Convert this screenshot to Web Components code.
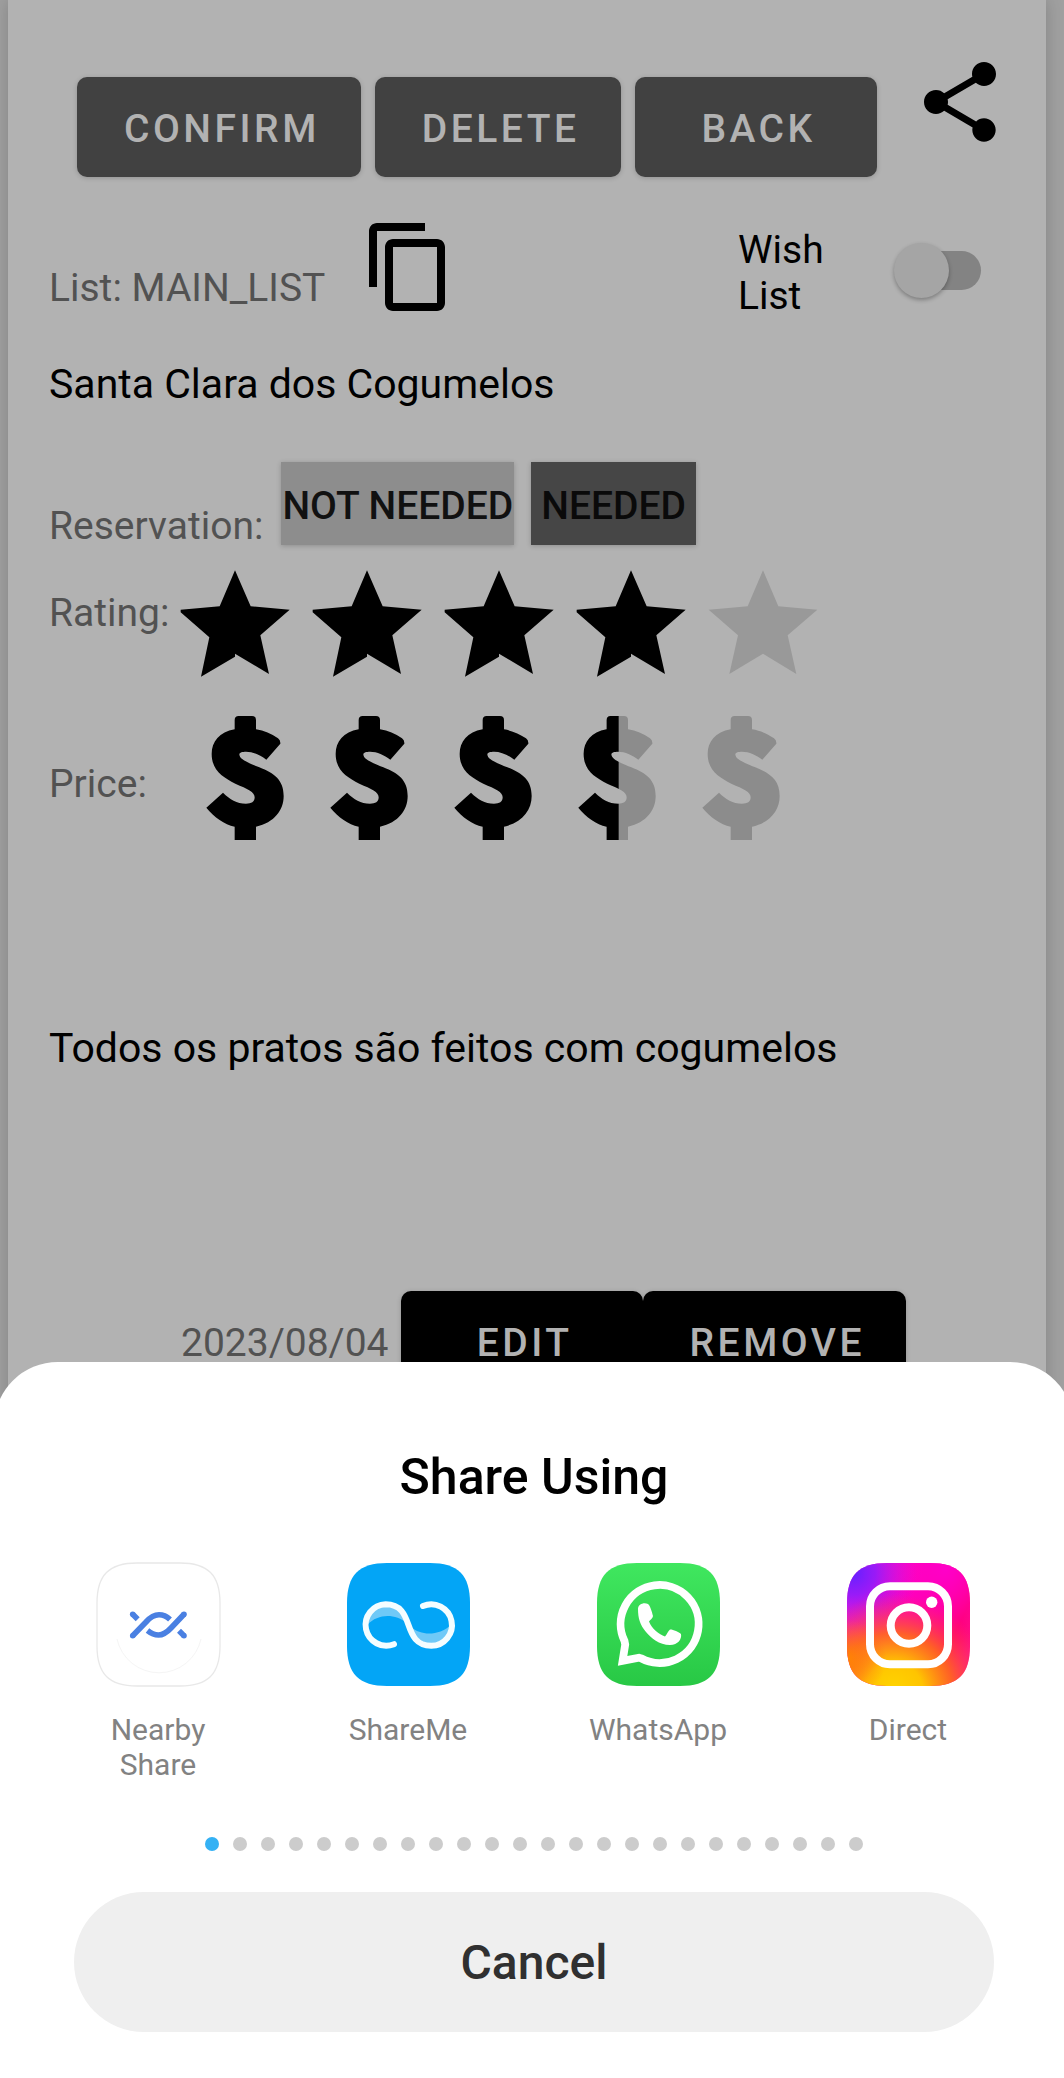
<!DOCTYPE html>
<html lang="en">
<head>
<meta charset="utf-8">
<meta name="viewport" content="width=device-width, initial-scale=1">
<title>Restaurant</title>
<style>
  html, body { margin: 0; }
  body { font-family: Roboto, "Liberation Sans", sans-serif; background: #a0a0a0; }
</style>
</head>
<body>
<restaurant-page></restaurant-page>
<script>
const define = (name, html, setup) => {
  const tpl = document.createElement('template');
  tpl.innerHTML = html;
  customElements.define(name, class extends HTMLElement {
    constructor() {
      super();
      this.attachShadow({ mode: 'open' }).append(tpl.content.cloneNode(true));
    }
    connectedCallback() { if (setup) setup(this, this.shadowRoot); }
  });
};

define('app-button', `
<style>
  :host { display: inline-flex; }
  button {
    font: 500 39px/46px Roboto, sans-serif; letter-spacing: 0.09em; text-transform: uppercase;
    min-width: 242px; height: 100px; padding: 4px 41px 0 47px; border: 0; border-radius: 10px;
    background: var(--button-bg, #414141); color: #b2b2b2;
    box-shadow: 0 1px 5px rgba(0, 0, 0, .18);
  }
</style>
<button type="button"><slot></slot></button>`);

define('choice-button', `
<style>
  :host { display: inline-flex; }
  button {
    font: 500 39px/46px Roboto, sans-serif; text-transform: uppercase; white-space: nowrap;
    height: 83px; padding: 4px var(--pad, 0) 0; border: 0; background: var(--choice-bg); color: var(--choice-ink);
    box-shadow: 0 1px 5px rgba(0, 0, 0, .2);
  }
</style>
<button type="button"><slot></slot></button>`);

define('icon-button', `
<style>
  :host { display: inline-flex; }
  button { display: flex; padding: 0; border: 0; background: none; color: #000; }
  svg { width: 96px; height: 96px; fill: currentColor; }
</style>
<button type="button"><svg viewBox="0 0 24 24"><path/></svg></button>`, (host, root) => {
  const paths = {
    share: 'M18 16.08c-.76 0-1.44.3-1.96.77L8.91 12.7c.05-.23.09-.46.09-.7s-.04-.47-.09-.7l7.05-4.11c.54.5 1.25.81 2.04.81 1.66 0 3-1.34 3-3s-1.34-3-3-3-3 1.34-3 3c0 .24.04.47.09.7L8.04 9.81C7.5 9.31 6.79 9 6 9c-1.66 0-3 1.34-3 3s1.34 3 3 3c.79 0 1.5-.31 2.04-.81l7.12 4.16c-.05.21-.08.43-.08.65 0 1.61 1.31 2.92 2.92 2.92s2.92-1.31 2.92-2.92-1.31-2.92-2.92-2.92z',
    copy: 'M16 1H4c-1.1 0-2 .9-2 2v14h2V3h12V1zm3 4H8c-1.1 0-2 .9-2 2v14c0 1.1.9 2 2 2h11c1.1 0 2-.9 2-2V7c0-1.1-.9-2-2-2zm0 16H8V7h11v14z'
  };
  root.querySelector('path').setAttribute('d', paths[host.getAttribute('icon')]);
  root.querySelector('button').setAttribute('aria-label', host.getAttribute('icon'));
});

define('toggle-switch', `
<style>
  :host { display: block; }
  label { display: flex; align-items: flex-start; justify-content: space-between; width: 243px; }
  span { width: 100px; font-size: 39px; line-height: 46px; color: #000; }
  input { appearance: none; margin: 16px 0 0; width: 87px; height: 55px; display: grid; align-items: center; }
  input::before, input::after { content: ""; grid-area: 1 / 1; }
  input::before { justify-self: end; width: 74px; height: 39px; border-radius: 20px; background: #838383; }
  input::after { width: 55px; height: 55px; border-radius: 50%; background: #a5a5a5; box-shadow: 0 2px 4px rgba(0, 0, 0, .3); }
  input:checked::after { justify-self: end; }
</style>
<label><span><slot></slot></span><input type="checkbox" role="switch"></label>`);

const STAR_ON = 'M393 392 L440 500 L557 510 L469 587 L495 703 L393 642 V651 L291 711 L316 593 L230 518 V510 L347 500Z';
const STAR_OFF = 'M393 392 L439 500 L556 510 L467 587 L493 703 L393 642 L292 703 L318 587 L230 510 L347 500Z';
define('star-rating', `
<style>
  :host { display: flex; }
  svg { width: 132px; height: 107px; }
</style>`, (host, root) => {
  const value = Number(host.getAttribute('value'));
  for (let i = 0; i < 5; i++) {
    const on = i < value;
    root.innerHTML += `<svg viewBox="195 391 396 321" aria-hidden="true"><path d="${on ? STAR_ON : STAR_OFF}" fill="${on ? '#000' : '#999'}"/></svg>`;
  }
});

const COIN = 'M166 118C120 126 97 155 97 192C97 240 130 262 168 281C205 297 226 305 226 322C226 336 216 341 200 341C172 341 152 328 131 308L81 353C105 382 135 403 166 410V450H230V410C285 398 313 360 313 318C313 270 285 250 240 232C205 218 180 208 180 193C180 187 190 185 200 185C222 185 242 195 261 209L303 161Q304 150 296 145C275 131 255 122 230 118V90Q230 78 218 78H178Q166 78 166 90Z';
define('price-rating', `
<style>
  :host { display: flex; }
  svg { width: 124px; height: 124px; }
</style>`, (host, root) => {
  const value = Number(host.getAttribute('value'));
  for (let i = 0; i < 5; i++) {
    const part = Math.max(0, Math.min(1, value - i));
    const cut = part < 1 ? part * 372 + 5 : 372;
    root.innerHTML += `<svg viewBox="11 78 372 372" aria-hidden="true">
      <clipPath id="c${i}"><rect x="11" y="78" width="${cut}" height="372"/></clipPath>
      ${part < 1 ? `<path d="${COIN}" fill="#8c8c8c"/>` : ''}
      ${part > 0 ? `<path d="${COIN}" clip-path="url(#c${i})"/>` : ''}</svg>`;
  }
});

define('restaurant-card', `
<style>
  :host {
    display: block; box-sizing: border-box; min-height: 100vh; margin: 0 18px 0 8px; padding: 54px 38px 0 41px;
    background: #b2b2b2; color: #525252; font-size: 39px; line-height: 46px;
    box-shadow: 0 0 16px rgba(0, 0, 0, .18);
  }
  .row { display: flex; align-items: flex-end; }
  .tools { height: 123px; gap: 14px; padding-left: 28px; }
  .tools icon-button { align-self: flex-start; margin-left: auto; }
  .list { height: 100px; margin-top: 42px; }
  .list > span { margin-bottom: 8px; }
  .list icon-button { align-self: flex-start; margin-left: 36px; }
  .list toggle-switch { margin: 0 27px 0 auto; }
  input, textarea {
    display: block; width: 100%; box-sizing: border-box; padding: 0; border: 0; resize: none; outline: 0;
    background: none; color: #000; font: 400 41px/48px Roboto, sans-serif;
  }
  input { height: 48px; margin-top: 41px; }
  textarea { height: 192px; margin-top: 184px; }
  .booking { height: 87px; margin-top: 54px; align-items: flex-start; }
  .booking > span { align-self: flex-end; margin-right: 18px; }
  .booking choice-button + choice-button { margin-left: 17px; }
  .stars { margin-top: 21px; align-items: flex-start; }
  .stars > span, .price > span { width: 120px; }
  .stars > span { margin-top: 20px; }
  .price { margin-top: 39px; align-items: flex-start; }
  .price > span { width: 134px; margin-top: 45px; }
  .visit { margin-top: 75px; align-items: flex-start; padding-left: 132px; }
  .visit time { margin: 29px 12px 0 0; }
  .visit app-button { --button-bg: #000; }
  .plain { --choice-bg: #8d8d8d; --choice-ink: #111; --pad: 1px; }
  .chosen { --choice-bg: #464646; --choice-ink: #0a0a0a; --pad: 10px; }
</style>
<div class="row tools">
  <app-button>Confirm</app-button><app-button>Delete</app-button><app-button>Back</app-button>
  <icon-button icon="share"></icon-button>
</div>
<div class="row list">
  <span>List: MAIN_LIST</span><icon-button icon="copy"></icon-button>
  <toggle-switch>Wish List</toggle-switch>
</div>
<input type="text" aria-label="Name" value="Santa Clara dos Cogumelos">
<div class="row booking">
  <span>Reservation:</span>
  <choice-button class="plain">Not needed</choice-button><choice-button class="chosen">Needed</choice-button>
</div>
<div class="row stars"><span>Rating:</span><star-rating value="4"></star-rating></div>
<div class="row price"><span>Price:</span><price-rating value="3.5"></price-rating></div>
<textarea aria-label="Notes">Todos os pratos são feitos com cogumelos</textarea>
<div class="row visit">
  <time>2023/08/04</time><app-button>Edit</app-button><app-button>Remove</app-button>
</div>`);

const TILE = 'M61.5 0H83C111 0 123 12 123 40V83C123 111 111 123 83 123H40C12 123 0 111 0 83V40C0 12 12 0 40 0Z';
const LOGOS = {
  nearby: `<path d="${TILE}" fill="#fff" stroke="#e8e8e8" stroke-width="1.3"/>
    <path d="M20 76A43 43 0 0 0 104 76" fill="none" stroke="#f5f5f5" stroke-width="1"/>
    <g fill="none" stroke="#4a80e2" stroke-width="5.6">
      <path d="M35.7 72.7L49 59Q55.500 51.800 62 51.800Q68 51.800 73 56.500"/>
      <path d="M87 51.300L74 65Q67.500 72 61.500 72Q56 72 50.500 67.500"/>
      <path d="M35.700 51.300L40.700 56.300M87 72.700L82 67.700"/></g>
    <g fill="#4a80e2"><circle cx="35.700" cy="72.700" r="2.800"/><circle cx="87" cy="51.300" r="2.800"/><circle cx="35.700" cy="51.300" r="2.800"/><circle cx="87" cy="72.700" r="2.800"/></g>`,
  shareme: `<path d="${TILE}" fill="#03a5f6"/>
    <path d="M20 62C21 38 50 35 60 60C48 51 32 50 20 62ZM104 62C103 84 74 90 64 64C74 73 92 73 104 62Z" fill="#6fc9f7"/>
    <path d="M47 81.200A20.700 20.700 0 1 1 38.700 41.300C54 41.300 58 52 61.500 62S69 82.700 84.300 82.700A20.700 20.700 0 1 0 76 43" fill="none" stroke="#f4fdff" stroke-width="6" stroke-linecap="round"/>`,
  whatsapp: `<linearGradient id="g" x2="0" y2="1"><stop stop-color="#40e75f"/><stop offset="1" stop-color="#28c845"/></linearGradient>
    <path d="${TILE}" fill="url(#g)"/>
    <path d="M44 95.300A39 39 0 1 0 27.500 78L28.200 81.500L25.600 97.800L42 94.700Z" fill="none" stroke="#fff" stroke-width="7.800"/>
    <path d="M41 46C41 41 47 39 51 41C53 42 55 49 56 53C56 55 53 57 52 58.500C55 66 62 71.500 68 73.500C70 71 71 68.500 73 66.500C75 66 82 69 84 71C85 76 81 82 73 82C62 82 54 75 49 69C43 62 41 55 41 46Z" fill="#fff"/>`,
  direct: `<linearGradient id="b" x1="0" y1=".2" x2="1" y2=".7"><stop stop-color="#f01fd0"/><stop offset=".45" stop-color="#ff00b4"/><stop offset=".85" stop-color="#ff0068"/><stop offset="1" stop-color="#ff1288"/></linearGradient>
    <radialGradient id="m" cx=".8" cy=".05" r=".6"><stop stop-color="#ff00c8"/><stop offset="1" stop-color="#ff00c8" stop-opacity="0"/></radialGradient>
    <radialGradient id="p" cx=".05" cy=".08" r=".52"><stop stop-color="#6420ff"/><stop offset=".35" stop-color="#8a1bff" stop-opacity=".85"/><stop offset="1" stop-color="#d010f0" stop-opacity="0"/></radialGradient>
    <radialGradient id="y" cx=".38" cy="1.050" r=".8"><stop stop-color="#ffd600"/><stop offset=".3" stop-color="#ffc400"/><stop offset=".6" stop-color="#ff6a1c" stop-opacity=".9"/><stop offset="1" stop-color="#ff2a60" stop-opacity="0"/></radialGradient>
    <radialGradient id="o" cx="0" cy=".78" r=".32"><stop stop-color="#ff8600"/><stop offset="1" stop-color="#ff6a20" stop-opacity="0"/></radialGradient>
    <path d="${TILE}" fill="url(#b)"/><path d="${TILE}" fill="url(#m)"/><path d="${TILE}" fill="url(#p)"/><path d="${TILE}" fill="url(#y)"/><path d="${TILE}" fill="url(#o)"/>
    <g fill="none" stroke="#fff" stroke-width="8"><rect x="23" y="23.300" width="78" height="78" rx="20"/><circle cx="62" cy="62.500" r="18.300"/></g>
    <circle cx="84.700" cy="39.300" r="5.700" fill="#fff"/>`
};
define('share-target', `
<style>
  :host { display: flex; flex: 1 1 0; justify-content: center; }
  button {
    display: flex; flex-direction: column; align-items: center; gap: 26px; width: 150px; padding: 0;
    border: 0; background: none; color: #828282; font: 400 30px/35px Roboto, sans-serif;
  }
  svg { width: 123px; height: 123px; overflow: visible; }
</style>
<button type="button"><svg viewBox="0 0 123 123" aria-hidden="true"></svg><span><slot></slot></span></button>`, (host, root) => {
  root.querySelector('svg').innerHTML = LOGOS[host.getAttribute('logo')];
});

define('page-dots', `
<style>
  :host { display: flex; justify-content: center; gap: 14px; }
  i { width: 14px; height: 14px; border-radius: 50%; background: #ccc; }
  i:first-of-type { background: #34b1f4; }
</style>`, (host, root) => {
  for (let i = 0; i < Number(host.getAttribute('count')); i++) root.append(document.createElement('i'));
});

define('share-sheet', `
<style>
  :host {
    display: flex; flex-direction: column; background: #fff; border-radius: 64px 64px 0 0;
    padding: 86px 80px 46px; box-sizing: border-box;
  }
  h2 { margin: 0; font: 500 50px/58px Roboto, sans-serif; color: #000; text-align: center; }
  .targets { display: flex; align-items: flex-start; margin: 57px -39px 0 -41px; }
  page-dots { margin-top: 55px; }
  .cancel {
    height: 140px; margin-top: 41px; padding: 2px 0 0; border: 0; border-radius: 70px; background: #efefef; color: #303030;
    font: 500 48px/56px Roboto, sans-serif;
  }
</style>
<h2>Share Using</h2>
<div class="targets">
  <share-target logo="nearby">Nearby Share</share-target>
  <share-target logo="shareme">ShareMe</share-target>
  <share-target logo="whatsapp">WhatsApp</share-target>
  <share-target logo="direct">Direct</share-target>
</div>
<page-dots count="24"></page-dots>
<button class="cancel" type="button">Cancel</button>`);

define('restaurant-page', `
<style>
  :host { display: block; position: relative; height: 100vh; overflow: hidden; }
  share-sheet { position: absolute; left: -6px; right: -10px; bottom: 0; }
</style>
<restaurant-card></restaurant-card>
<share-sheet role="dialog" aria-label="Share Using"></share-sheet>`);
</script>
</body>
</html>
